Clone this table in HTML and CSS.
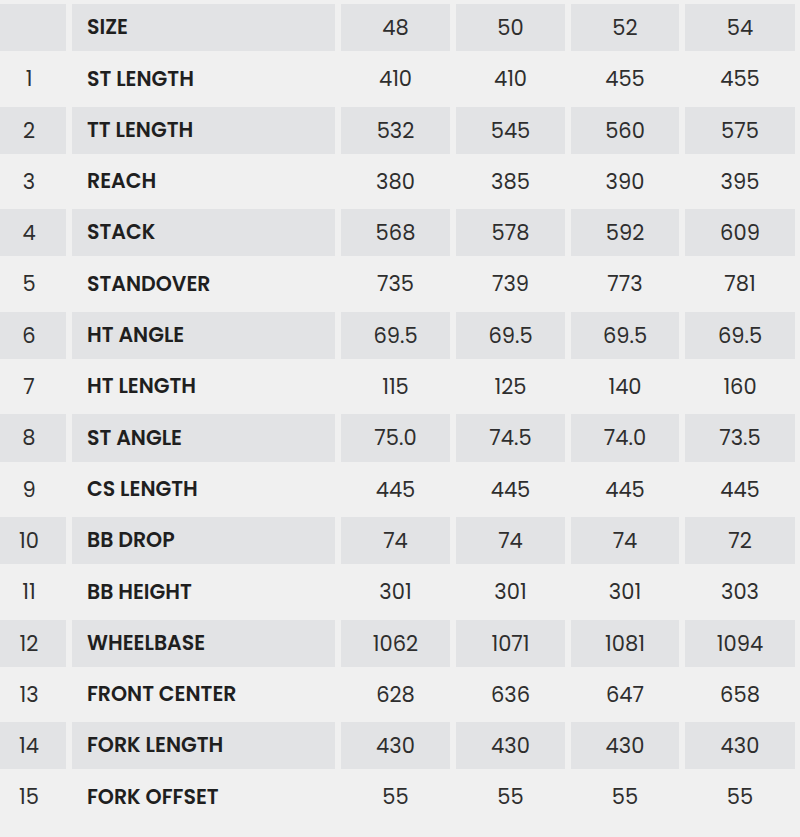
FILE: index.html
```html
<!DOCTYPE html>
<html lang="en">
<head>
<meta charset="utf-8">
<title>Geometry</title>
<link rel="stylesheet" href="styles.css">
</head>
<body>
<table class="geo">
  <colgroup>
    <col class="c-num"><col class="c-label"><col class="c-v1"><col class="c-v2"><col class="c-v3"><col class="c-v4">
  </colgroup>
  <tbody>
    <tr class="shade"><td class="idx"></td><td class="label">SIZE</td><td>48</td><td>50</td><td>52</td><td>54</td></tr>
    <tr><td class="idx">1</td><td class="label">ST LENGTH</td><td>410</td><td>410</td><td>455</td><td>455</td></tr>
    <tr class="shade"><td class="idx">2</td><td class="label">TT LENGTH</td><td>532</td><td>545</td><td>560</td><td>575</td></tr>
    <tr><td class="idx">3</td><td class="label">REACH</td><td>380</td><td>385</td><td>390</td><td>395</td></tr>
    <tr class="shade"><td class="idx">4</td><td class="label">STACK</td><td>568</td><td>578</td><td>592</td><td>609</td></tr>
    <tr><td class="idx">5</td><td class="label">STANDOVER</td><td>735</td><td>739</td><td>773</td><td>781</td></tr>
    <tr class="shade"><td class="idx">6</td><td class="label">HT ANGLE</td><td>69.5</td><td>69.5</td><td>69.5</td><td>69.5</td></tr>
    <tr><td class="idx">7</td><td class="label">HT LENGTH</td><td>115</td><td>125</td><td>140</td><td>160</td></tr>
    <tr class="shade"><td class="idx">8</td><td class="label">ST ANGLE</td><td>75.0</td><td>74.5</td><td>74.0</td><td>73.5</td></tr>
    <tr><td class="idx">9</td><td class="label">CS LENGTH</td><td>445</td><td>445</td><td>445</td><td>445</td></tr>
    <tr class="shade"><td class="idx">10</td><td class="label">BB DROP</td><td>74</td><td>74</td><td>74</td><td>72</td></tr>
    <tr><td class="idx">11</td><td class="label">BB HEIGHT</td><td>301</td><td>301</td><td>301</td><td>303</td></tr>
    <tr class="shade"><td class="idx">12</td><td class="label">WHEELBASE</td><td>1062</td><td>1071</td><td>1081</td><td>1094</td></tr>
    <tr><td class="idx">13</td><td class="label">FRONT CENTER</td><td>628</td><td>636</td><td>647</td><td>658</td></tr>
    <tr class="shade"><td class="idx">14</td><td class="label">FORK LENGTH</td><td>430</td><td>430</td><td>430</td><td>430</td></tr>
    <tr><td class="idx">15</td><td class="label">FORK OFFSET</td><td>55</td><td>55</td><td>55</td><td>55</td></tr>
  </tbody>
</table>
</body>
</html>
```
FILE: styles.css
```css
html, body {
  margin: 0;
  padding: 0;
  background: #f0f0f0;
}
body {
  font-family: "Poppins", "Inter", "DejaVu Sans", sans-serif;
  color: #2b2b2b;
  overflow: hidden;
}
.geo {
  table-layout: fixed;
  border-collapse: separate;
  border-spacing: 6px 4px;
  margin-left: -6px;
  width: 807px;
}
.c-num { width: 66px; }
.c-label { width: 263px; }
.c-v1 { width: 109px; }
.c-v2 { width: 109px; }
.c-v3 { width: 108px; }
.c-v4 { width: 110px; }
.geo td {
  height: 47.3px;
  padding: 0;
  text-align: center;
  vertical-align: middle;
  font-size: 21px;
  line-height: 1.4;
  font-weight: 400;
  color: #2e2e2e;
}
.geo tr.shade td {
  background: #e2e3e5;
}
.geo td.idx {
  padding-right: 8px;
}
.geo td.label {
  text-align: left;
  padding-left: 15px;
  font-size: 20.5px;
  font-weight: 600;
  color: #1f1f1f;
}
```
